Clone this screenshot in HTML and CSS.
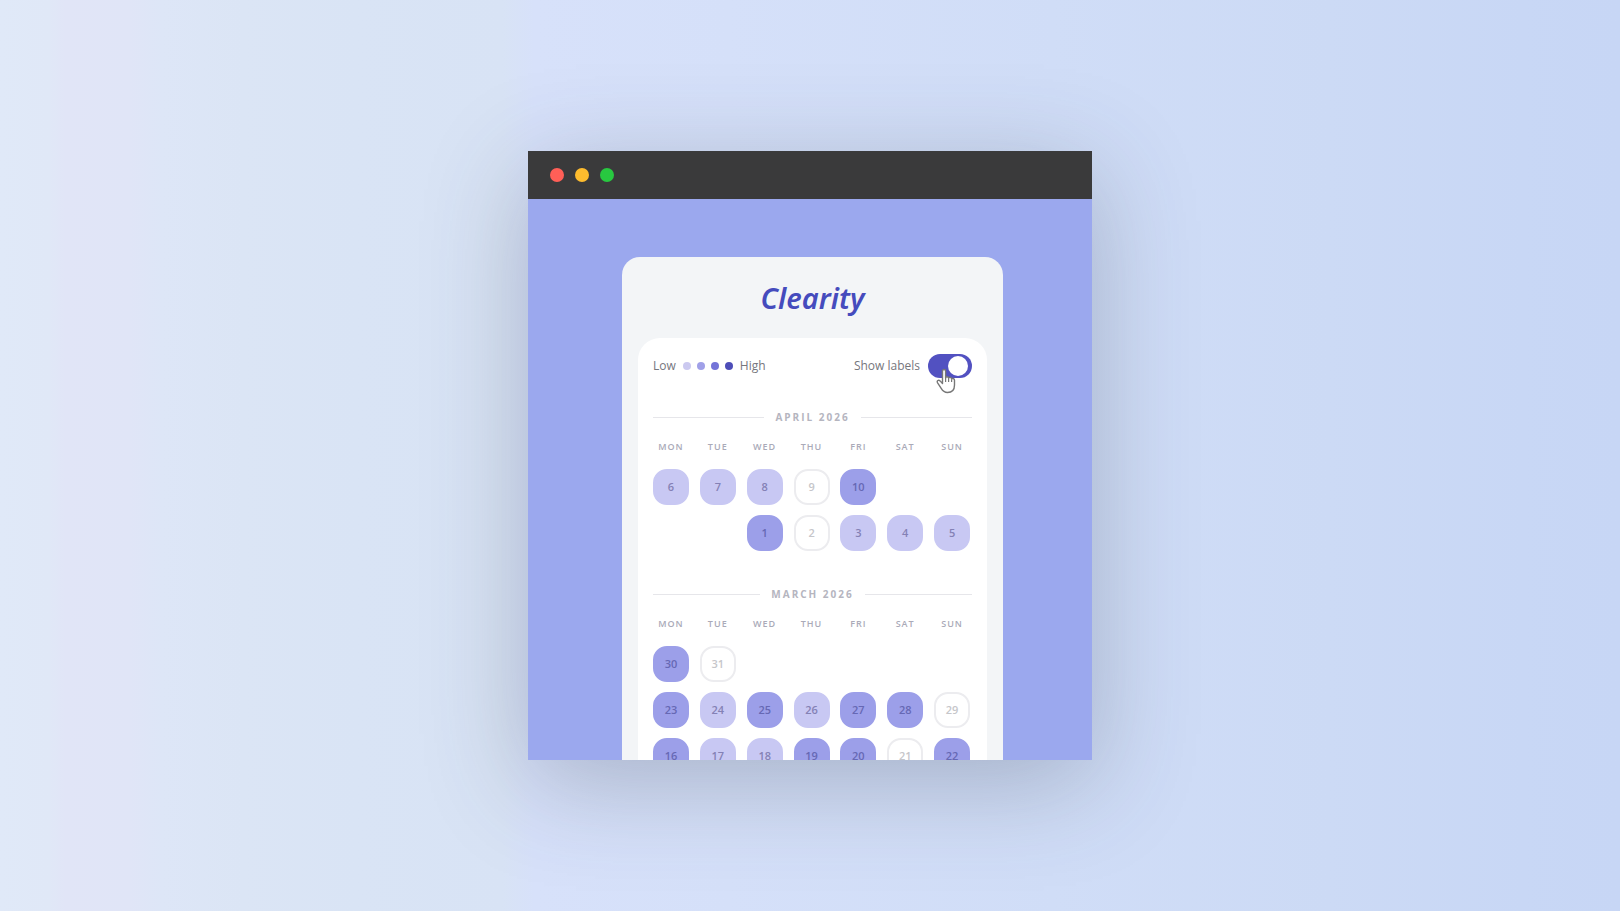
FILE: index.html
```
<!DOCTYPE html>
<html lang="en">
<head>
    <meta charset="UTF-8">
    <meta name="viewport" content="width=device-width, initial-scale=1.0">
    <title>Clearity</title>
    <link rel="stylesheet" href="styles.css">
</head>
<body>
    <div class="window">
        <div class="titlebar">
            <span class="light red"></span>
            <span class="light yellow"></span>
            <span class="light green"></span>
        </div>

        <div class="screen">
            <main class="app">
                <h1>Clearity</h1>

                <div class="card">
                    <div class="toolbar">
                        <div class="legend">
                            <span>Low</span>
                            <span class="scale">
                                <i class="dot dot-1"></i>
                                <i class="dot dot-2"></i>
                                <i class="dot dot-3"></i>
                                <i class="dot dot-4"></i>
                            </span>
                            <span>High</span>
                        </div>
                        <div class="switch">
                            <label for="labels">Show labels</label>
                            <input type="checkbox" id="labels" class="toggle" checked>
                            <svg class="cursor" viewBox="0 0 20 26" width="20" height="26">
                                <path d="M6.5 15.5V3.2C6.5 .9 9.6 .9 9.6 3.2V10C9.8 8.3 12.4 8.4 12.6 10.3C13.2 8.8 15.5 9.2 15.6 11.1C16.3 9.9 18.5 10.4 18.5 12.3V17C18.5 21.5 16 24.5 11.5 24.5C8 24.5 6.6 22.8 5.2 20.4L1.6 14.8C.4 12.7 2.6 11.4 4.1 12.9Z" fill="#fff" stroke="#777" stroke-width="1.4" stroke-linejoin="round"/>
                                <path d="M9.6 9.5V14M12.6 10.5V14M15.6 11.5V14" fill="none" stroke="#777" stroke-width="1.2"/>
                            </svg>
                        </div>
                    </div>

                    <section class="month">
                        <h2>April 2026</h2>
                        <table>
                            <thead>
                                <tr><th>Mon</th><th>Tue</th><th>Wed</th><th>Thu</th><th>Fri</th><th>Sat</th><th>Sun</th></tr>
                            </thead>
                            <tbody>
                                <tr>
                                    <td><span class="day low">6</span></td>
                                    <td><span class="day low">7</span></td>
                                    <td><span class="day low">8</span></td>
                                    <td><span class="day">9</span></td>
                                    <td><span class="day mid">10</span></td>
                                    <td></td>
                                    <td></td>
                                </tr>
                                <tr>
                                    <td></td>
                                    <td></td>
                                    <td><span class="day mid">1</span></td>
                                    <td><span class="day">2</span></td>
                                    <td><span class="day low">3</span></td>
                                    <td><span class="day low">4</span></td>
                                    <td><span class="day low">5</span></td>
                                </tr>
                            </tbody>
                        </table>
                    </section>

                    <section class="month">
                        <h2>March 2026</h2>
                        <table>
                            <thead>
                                <tr><th>Mon</th><th>Tue</th><th>Wed</th><th>Thu</th><th>Fri</th><th>Sat</th><th>Sun</th></tr>
                            </thead>
                            <tbody>
                                <tr>
                                    <td><span class="day mid">30</span></td>
                                    <td><span class="day">31</span></td>
                                    <td></td>
                                    <td></td>
                                    <td></td>
                                    <td></td>
                                    <td></td>
                                </tr>
                                <tr>
                                    <td><span class="day mid">23</span></td>
                                    <td><span class="day low">24</span></td>
                                    <td><span class="day mid">25</span></td>
                                    <td><span class="day low">26</span></td>
                                    <td><span class="day mid">27</span></td>
                                    <td><span class="day mid">28</span></td>
                                    <td><span class="day">29</span></td>
                                </tr>
                                <tr>
                                    <td><span class="day mid">16</span></td>
                                    <td><span class="day low">17</span></td>
                                    <td><span class="day low">18</span></td>
                                    <td><span class="day mid">19</span></td>
                                    <td><span class="day mid">20</span></td>
                                    <td><span class="day">21</span></td>
                                    <td><span class="day mid">22</span></td>
                                </tr>
                            </tbody>
                        </table>
                    </section>
                </div>
            </main>
        </div>
    </div>
</body>
</html>
```
FILE: styles.css
```
* {
    box-sizing: border-box;
}

body {
    margin: 0;
    min-height: 100vh;
    display: flex;
    align-items: center;
    justify-content: center;
    font-family: "Open Sans", "Noto Sans", sans-serif;
    background: linear-gradient(90deg, #e0e9f8 0%, #e0e8f7 3%, #e1e5f7 4%, #e0e5f7 8%, #dde6f7 10%, #dbe5f5 15%, #d9e4f5 22%, #d8e3f5 31%, #d7e1fa 33%, #d5e0f9 45%, #d0ddf7 65%, #ccdaf5 82%, #c8d7f5 94%, #c7d6f5 100%);
}

.window {
    width: 100%;
    max-width: 564px;
    box-shadow: 0 22px 96px rgba(60, 70, 85, 0.3);
}

.titlebar {
    display: flex;
    align-items: center;
    gap: 11px;
    height: 48px;
    padding: 0 22px;
    background: #3a3a3b;
}

.light {
    width: 14px;
    height: 14px;
    border-radius: 50%;
}

.red {
    background: #ff5f57;
}

.yellow {
    background: #febc2e;
}

.green {
    background: #28c840;
}

.screen {
    height: 561px;
    padding: 58px 89px 0 94px;
    background: #9ba8ee;
    overflow: hidden;
}

.app {
    padding: 16px 16px 32px;
    border-radius: 18px;
    background: #f3f5f7;
}

h1 {
    margin: 0 0 16px;
    font-family: "Noto Sans", "Open Sans", sans-serif;
    font-size: 29px;
    font-style: italic;
    font-weight: 600;
    line-height: 49px;
    text-align: center;
    color: #454bbd;
}

.card {
    padding: 16px 15px;
    border-radius: 22px;
    background: #fff;
}

.toolbar {
    display: flex;
    align-items: center;
    justify-content: space-between;
    margin-bottom: 29px;
    font-size: 12px;
    font-weight: 500;
    line-height: 24px;
    color: #76767d;
}

.legend,
.scale,
.switch {
    display: flex;
    align-items: center;
}

.legend {
    gap: 7px;
}

.scale {
    gap: 6px;
}

.dot {
    width: 8px;
    height: 8px;
    border-radius: 50%;
}

.dot-1 {
    background: #cbc9f0;
}

.dot-2 {
    background: #a0a0e8;
}

.dot-3 {
    background: #7474d8;
}

.dot-4 {
    background: #4d4db8;
}

.switch {
    position: relative;
    gap: 8px;
}

.toggle {
    appearance: none;
    width: 44px;
    height: 24px;
    margin: 0;
    padding: 2px;
    border-radius: 12px;
    background: #c8c8d0;
}

.toggle::before {
    content: "";
    display: block;
    width: 20px;
    height: 20px;
    border-radius: 50%;
    background: #fff;
}

.toggle:checked {
    background: #5251c1;
}

.toggle:checked::before {
    margin-left: 18px;
}

.cursor {
    position: absolute;
    top: 14px;
    right: 16px;
}

.month {
    margin-bottom: 23px;
}

h2 {
    display: flex;
    align-items: center;
    gap: 11px;
    margin: 0 0 12px;
    font-size: 10px;
    font-weight: 700;
    line-height: 20px;
    letter-spacing: 2px;
    text-transform: uppercase;
    color: #b5b5bf;
}

h2::before,
h2::after {
    content: "";
    flex: 1;
    height: 1px;
    background: #e6e6ea;
}

table {
    width: calc(100% + 9px);
    table-layout: fixed;
    border-collapse: collapse;
}

th {
    height: 30px;
    padding: 0 11px 14px 0;
    font-size: 9px;
    font-weight: 600;
    line-height: 16px;
    letter-spacing: 1px;
    text-align: center;
    text-transform: uppercase;
    color: #aaaab8;
}

td {
    height: 46px;
    padding: 0;
    vertical-align: top;
}

.day {
    display: block;
    width: 36px;
    height: 36px;
    border: 2px solid #ececef;
    border-radius: 14px;
    font-size: 11px;
    font-weight: 600;
    line-height: 32px;
    text-align: center;
    color: #c6c6ca;
}

.low {
    border-color: #c8c8f3;
    background: #c8c8f3;
    color: #8481b5;
}

.mid {
    border-color: #9c9fe9;
    background: #9c9fe9;
    color: #6668b4;
}
```
